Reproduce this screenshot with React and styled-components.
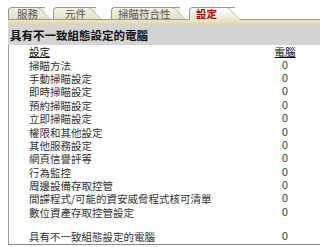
import React from "react";
import styled, { createGlobalStyle } from "styled-components";

const GlobalStyle = createGlobalStyle`
  body {
    margin: 0;
    background: #fff;
    font-family: "Noto Sans CJK TC", "Noto Sans", sans-serif;
  }
`;

const Page = styled.div`
  width: 312px;
  padding: 0 8px;
`;

const TabRow = styled.div`
  display: flex;
  align-items: flex-end;
  height: 19px;
`;

const Tab = styled.div`
  position: relative;
  box-sizing: border-box;
  width: ${(p) => p.$w}px;
  margin-left: ${(p) => p.$ml}px;
  height: ${(p) => (p.$active ? 13 : 12)}px;
  margin-bottom: ${(p) => (p.$active ? -1 : 0)}px;
  z-index: ${(p) => (p.$active ? 2 : 1)};
  padding-left: ${(p) => p.$pl}px;
  border-top: 1px solid #9a9a9a;
  border-left: 1px solid #9a9a9a;
  border-top-left-radius: 4px;
  background: ${(p) =>
    p.$active
      ? "linear-gradient(#ffffff, #f3f0e0 60%, #e9e4c6)"
      : "linear-gradient(#f4f1e3, #e6e1c9)"};
  font-size: 10.5px;
  line-height: 11px;
  color: ${(p) => (p.$active ? "#b20000" : "#555")};
  font-weight: ${(p) => (p.$active ? "bold" : "normal")};

  &::after {
    content: "";
    position: absolute;
    top: -1px;
    bottom: 0;
    right: -6px;
    width: 12px;
    background: inherit;
    border-top: 1px solid #9a9a9a;
    border-right: 1px solid #9a9a9a;
    border-top-right-radius: 3px;
    transform: skewX(45deg);
    transform-origin: bottom center;
  }
`;

const TabLabel = styled.span`
  position: relative;
  z-index: 1;
  white-space: nowrap;
`;

const Strip = styled.div`
  height: 5px;
  border-top: 1px solid #9a9a9a;
  background: linear-gradient(#ebe6c8, #dcd4a6);
`;

const Header = styled.div`
  height: 20px;
  line-height: 20px;
  padding-left: 2px;
  background: #d4d4d4;
  font-size: 11.5px;
  font-weight: bold;
  color: #111;
`;

const Panel = styled.div`
  border-left: 1px solid #9a9a9a;
  border-bottom: 1px solid #8a8a8a;
  padding-bottom: 1px;
`;

const Row = styled.div`
  display: flex;
  align-items: center;
  height: 13.4px;
  line-height: 13px;
  padding-left: 20px;
  font-size: 10.5px;
  color: ${(p) => (p.$head ? "#111" : "#333")};
`;

const Spacer = styled.div`
  height: 11px;
`;

const Label = styled.span`
  flex: 1;
  white-space: nowrap;
  text-decoration: ${(p) => (p.$u ? "underline" : "none")};
`;

const Value = styled.span`
  width: 30px;
  margin-right: 20px;
  text-align: center;
  text-decoration: ${(p) => (p.$u ? "underline" : "none")};
  font-family: ${(p) =>
    p.$u ? '"Noto Sans CJK TC", sans-serif' : '"Liberation Sans", Arial, sans-serif'};
`;

const tabs = [
  { label: "服務", w: 37, ml: 0, pl: 8 },
  { label: "元件", w: 43, ml: 8, pl: 11 },
  { label: "掃瞄符合性", w: 69, ml: 15, pl: 6 },
  { label: "設定", w: 46, ml: 9, pl: 6, active: true },
];

const rows = [
  "掃瞄方法",
  "手動掃瞄設定",
  "即時掃瞄設定",
  "預約掃瞄設定",
  "立即掃瞄設定",
  "權限和其他設定",
  "其他服務設定",
  "網頁信譽評等",
  "行為監控",
  "周邊設備存取控管",
  "間諜程式/可能的資安威脅程式核可清單",
  "數位資產存取控管設定",
];

const App = () => (
  <Page>
    <GlobalStyle />
    <TabRow>
      {tabs.map((t) => (
        <Tab key={t.label} $w={t.w} $ml={t.ml} $pl={t.pl} $active={t.active}>
          <TabLabel>{t.label}</TabLabel>
        </Tab>
      ))}
    </TabRow>
    <Strip />
    <Header>具有不一致組態設定的電腦</Header>
    <Panel>
      <Row $head>
        <Label $u>設定</Label>
        <Value $u>電腦</Value>
      </Row>
      {rows.map((r) => (
        <Row key={r}>
          <Label>{r}</Label>
          <Value>0</Value>
        </Row>
      ))}
      <Spacer />
      <Row>
        <Label>具有不一致組態設定的電腦</Label>
        <Value>0</Value>
      </Row>
    </Panel>
  </Page>
);

export default App;
